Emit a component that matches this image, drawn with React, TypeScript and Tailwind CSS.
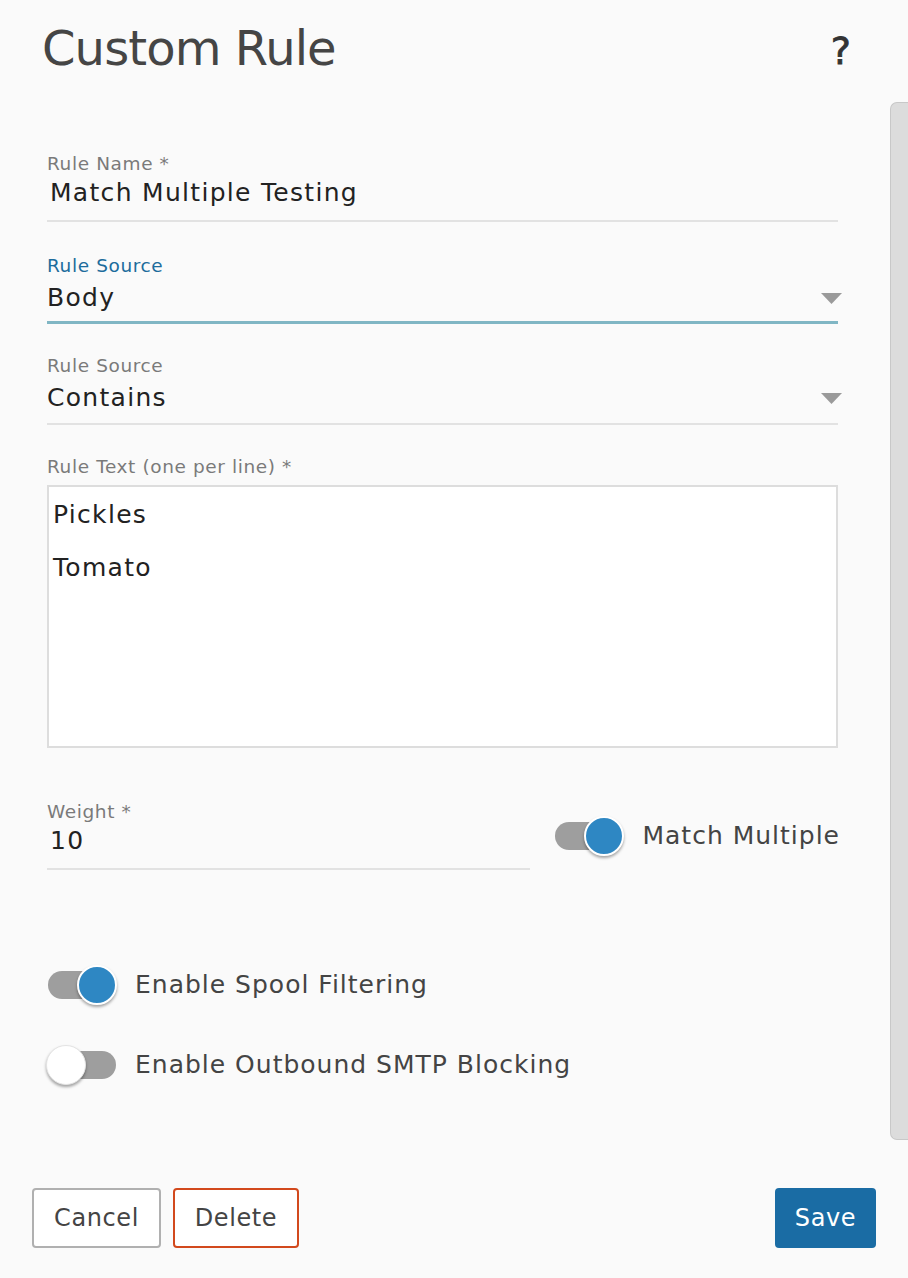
import React from "react";

function Triangle() {
  return (
    <svg width="21" height="11" viewBox="0 0 21 11" className="-mr-[4px] shrink-0">
      <polygon points="0,0 21,0 10.5,11" fill="#9a9a9a" />
    </svg>
  );
}

function InputField({ label, value }: { label: string; value: string }) {
  return (
    <div className="flex flex-col border-b-2 border-[#e2e2e2] pb-[9px]">
      <div className="text-[18.5px] leading-[22px] tracking-[0.6px] text-[#7a7a7a]">{label}</div>
      <div className="text-[25px] leading-[36px] tracking-[1.3px] text-[#222] pl-[3px]">{value}</div>
    </div>
  );
}

function Toggle({ on }: { on: boolean }) {
  return (
    <div className={on ? "relative w-[69px] h-[42px] flex items-center shrink-0" : "relative w-[70px] h-[42px] flex items-center shrink-0"}>
      <div className={on ? "h-[28px] w-[64px] rounded-full bg-[#9e9e9e]" : "ml-[4px] h-[28px] w-[66px] rounded-full bg-[#9e9e9e]"} />
      <div
        className={
          on
            ? "absolute right-0 top-[1px] w-[40px] h-[40px] rounded-full bg-[#2e87c3] border-2 border-white shadow-[0_2px_3px_rgba(0,0,0,0.35)]"
            : "absolute left-0 top-[1px] w-[40px] h-[40px] rounded-full bg-white border border-[#e4e4e4] shadow-[0_2px_3px_rgba(0,0,0,0.35)]"
        }
      />
    </div>
  );
}

export default function App() {
  return (
    <div className="w-[908px] h-[1278px] bg-[#fafafa] flex flex-col overflow-hidden font-['DejaVu_Sans',sans-serif]">
      <header className="h-[100px] shrink-0 flex items-start justify-between pl-[42px] pr-[57px]">
        <h1 className="mt-[19px] text-[48px] leading-[58px] tracking-[-0.9px] text-[#454545]">Custom Rule</h1>
        <span className="mt-[28px] text-[38px] leading-[46px] text-[#333] [-webkit-text-stroke:0.8px_#333]">?</span>
      </header>

      <div className="h-[1040px] shrink-0 flex">
        <main className="flex-1 flex flex-col pl-[47px] pr-[52px] pt-[53px]">
          <InputField label="Rule Name *" value="Match Multiple Testing" />

          <div className="mt-[33px] flex flex-col border-b-[3px] border-[#80b6c4] pb-[2px]">
            <div className="text-[18.5px] leading-[22px] tracking-[0.6px] text-[#1d6c9c]">Rule Source</div>
            <div className="flex items-center justify-between">
              <span className="text-[25px] leading-[42px] tracking-[1.3px] text-[#222]">Body</span>
              <Triangle />
            </div>
          </div>

          <div className="mt-[31px] flex flex-col border-b-2 border-[#e2e2e2] pb-[4px]">
            <div className="text-[18.5px] leading-[22px] tracking-[0.6px] text-[#7a7a7a]">Rule Source</div>
            <div className="flex items-center justify-between">
              <span className="text-[25px] leading-[42px] tracking-[1.3px] text-[#222]">Contains</span>
              <Triangle />
            </div>
          </div>

          <div className="mt-[31px] text-[18.5px] leading-[22px] tracking-[0.6px] text-[#7a7a7a]">Rule Text (one per line) *</div>
          <div className="mt-[7px] h-[263px] border-2 border-[#dddddd] bg-white pt-[1px] pl-[4px] text-[25px] leading-[53px] tracking-[1.3px] text-[#222]">
            <div>Pickles</div>
            <div>Tomato</div>
          </div>

          <div className="mt-[53px] flex items-center justify-between">
            <div className="w-[483px]">
              <InputField label="Weight *" value="10" />
            </div>
            <div className="flex items-center gap-[18px] -mr-[2px]">
              <Toggle on={true} />
              <span className="text-[25px] leading-[32px] tracking-[1px] text-[#444]">Match Multiple</span>
            </div>
          </div>

          <div className="mt-[94px] flex items-center gap-[18px] ml-[1px]">
            <Toggle on={true} />
            <span className="text-[25px] leading-[32px] tracking-[1px] text-[#444]">Enable Spool Filtering</span>
          </div>
          <div className="mt-[38px] flex items-center gap-[19px] -ml-[1px]">
            <Toggle on={false} />
            <span className="text-[25px] leading-[32px] tracking-[1px] text-[#444]">Enable Outbound SMTP Blocking</span>
          </div>
        </main>
        <div className="w-[18px] shrink-0 pt-[2px]">
          <div className="h-full bg-[#dcdcdc] border border-[#c8c8c8] border-r-0 rounded-l-[7px]" />
        </div>
      </div>

      <footer className="flex-1 flex items-start justify-between px-[32px] pt-[48px]">
        <div className="flex gap-[12px]">
          <button className="w-[129px] h-[60px] bg-white border-2 border-[#b0b0b0] rounded-[4px] text-[24px] tracking-[0.6px] text-[#444]">Cancel</button>
          <button className="w-[126px] h-[60px] bg-white border-2 border-[#d2491d] rounded-[4px] text-[24px] tracking-[0.6px] text-[#444]">Delete</button>
        </div>
        <button className="w-[101px] h-[60px] bg-[#1a6ca4] rounded-[4px] text-[24px] tracking-[0.6px] text-white">Save</button>
      </footer>
    </div>
  );
}
